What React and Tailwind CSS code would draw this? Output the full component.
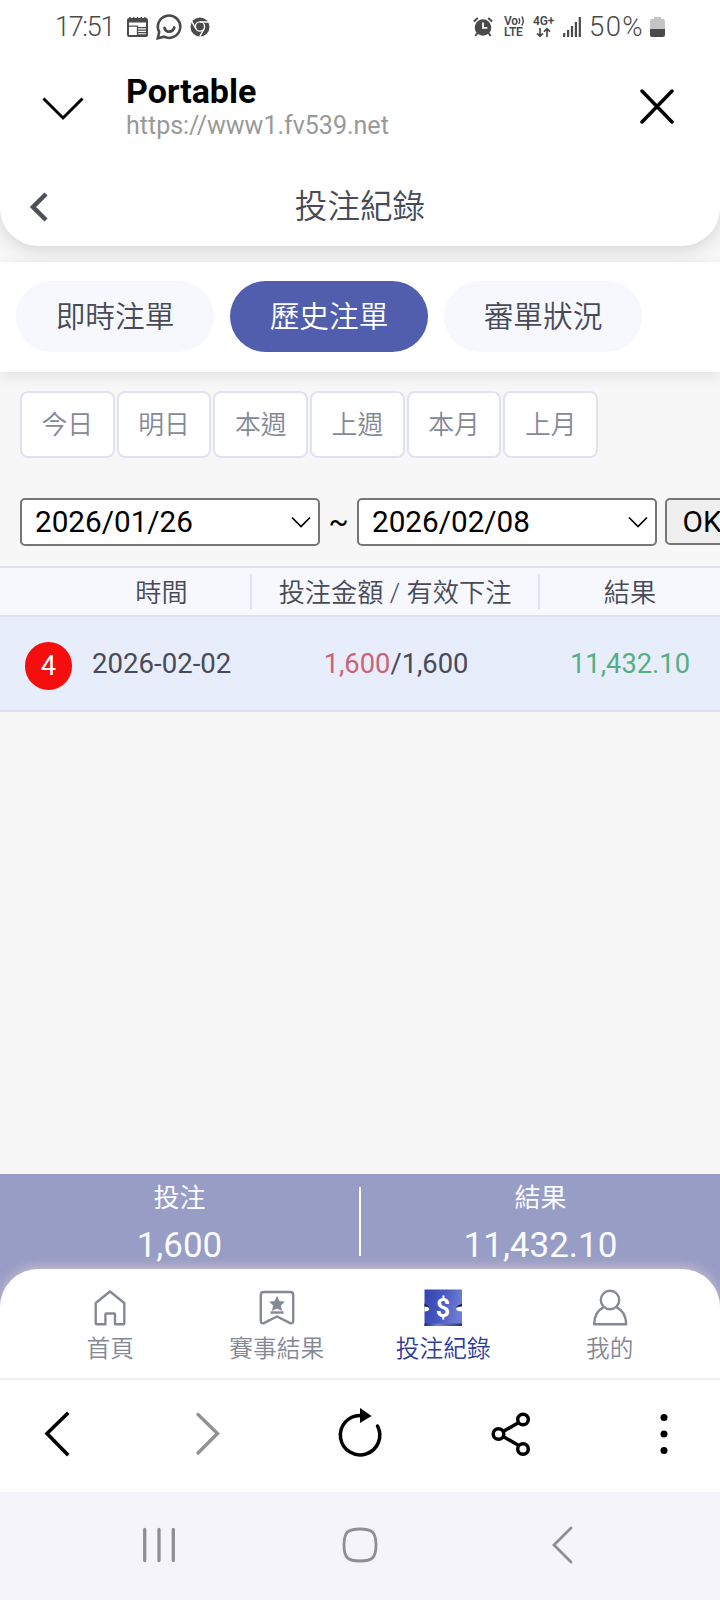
import React, {useState} from 'react'

const tabs = ['即時注單', '歷史注單', '審單狀況']
const ranges = ['今日', '明日', '本週', '上週', '本月', '上月']

function StatusBar(){
  return (
    <div className="flex h-[53px] shrink-0 items-center pl-[55px] text-[#4a4a4a]">
      <span className="w-[72px] whitespace-nowrap pt-px text-[27px] font-[350] leading-none tracking-[-1.3px]">17:51</span>
      <svg className="mr-2 h-[26px] w-[21px]" viewBox="0 0 21 26">
        <rect x="1" y="5" width="19" height="17" rx="1" fill="none" stroke="currentColor" strokeWidth="2" />
        <path d="M1 5h19v3.500H1z" fill="currentColor" />
        <path d="M3 3v4M6.700 3v4M10.500 3v4M14.200 3v4M18 3v4" stroke="currentColor" strokeWidth="1.500" />
        <path d="M1 12.200h9.500v10M11 13.700h8M11 16.200h8M11 18.700h8M11 21h8" fill="none" stroke="currentColor" strokeWidth="1.300" />
      </svg>
      <svg className="mr-2 h-[26px] w-[26px]" viewBox="0 0 26 26">
        <path d="M3.200 18A11.200 11.200 0 1 1 8 22.700L1.800 24.200z" fill="none" stroke="currentColor" strokeWidth="2.600" />
        <path d="M8.500 14c1.200 5 8 5 9.800-.5" fill="none" stroke="currentColor" strokeWidth="2.800" strokeLinecap="round" />
      </svg>
      <svg className="h-[20px] w-[20px]" viewBox="0 0 20 20">
        <circle cx="10" cy="10" r="9.500" fill="currentColor" />
        <circle cx="10" cy="9.500" r="4.600" fill="currentColor" stroke="#fff" strokeWidth="1.400" />
        <path d="M10 5h9M6 12L1.800 4.600M14 12l-4.300 7.600" stroke="#fff" strokeWidth="1.400" />
      </svg>
      <svg className="ml-[263px] h-[20px] w-[20px]" viewBox="0 0 20 20">
        <circle cx="10" cy="10.500" r="8.300" fill="currentColor" />
        <path d="M.8 4.600L4.800 1M19.200 4.600L15.200 1M4.500 16L2.300 19M15.500 16l2.200 3" stroke="currentColor" strokeWidth="2" />
        <path d="M10 5.500v5.300h4.300" fill="none" stroke="#fff" strokeWidth="1.800" />
      </svg>
      <div className="ml-[11px] w-[22px] whitespace-nowrap text-[12px] font-semibold leading-[11px] tracking-[-.2px]">
        <div className="flex items-center">Vo
          <svg className="h-[10px] w-[7px]" viewBox="0 0 7 10">
            <path d="M.8 2.200q1.800 2.800 0 5.600M3.800.5q3 4.500 0 9" fill="none" stroke="currentColor" strokeWidth="1.400" />
          </svg>
        </div>
        <div>LTE</div>
      </div>
      <div className="ml-[7px] w-[23px] whitespace-nowrap text-[12px] font-semibold leading-[11px] tracking-[-.2px]">
        <div>4G+</div>
        <svg className="ml-[3px] h-[11px] w-[15px]" viewBox="0 0 15 11">
          <path d="M4 1v8M1 6.300l3 3 3-3M11 10V2M8 4.700l3-3 3 3" fill="none" stroke="currentColor" strokeWidth="1.700" />
        </svg>
      </div>
      <svg className="ml-[7px] h-[20px] w-[18px]" viewBox="0 0 18 20">
        <path d="M1.200 16v4M5.100 13v7M9 9v11M12.900 5v15M16.800 0v20" stroke="currentColor" strokeWidth="2.200" />
      </svg>
      <span className="ml-[8px] w-[60px] whitespace-nowrap pt-px text-[27.500px] font-[350] leading-none tracking-[1.400px]">50%</span>
      <svg className="ml-px h-[20px] w-[15px]" viewBox="0 0 15 20">
        <path d="M4 2V0h7v2h2q2 0 2 2v8H0V4q0-2 2-2z" fill="#c4c4c4" />
        <path d="M0 12h15v6q0 2-2 2H2q-2 0-2-2z" fill="currentColor" />
      </svg>
    </div>
  )
}

function BrowserHeader(){
  return (
    <div className="flex h-[107px] shrink-0 items-start">
      <svg className="ml-[42px] mt-[43px] h-[26px] w-[42px]" viewBox="0 0 42 26">
        <path d="M1.500 2.500L21 22 40.500 2.500" fill="none" stroke="#000" strokeWidth="3" />
      </svg>
      <div className="ml-[42px] mt-[19px] w-[513px]">
        <div className="text-[34px] font-bold leading-[39px] text-black">Portable</div>
        <div className="text-[25px] leading-[30px] text-[#999]">https://www1.fv539.net</div>
      </div>
      <svg className="mt-[35px] h-[36px] w-[36px]" viewBox="0 0 36 36">
        <path d="M3 3l30 31M33 3L3 34" fill="none" stroke="#000" strokeWidth="3.500" strokeLinecap="round" />
      </svg>
    </div>
  )
}

function DateSelect({value}){
  return (
    <button className="flex h-[48px] w-[300px] shrink-0 items-center justify-between rounded-[5px] border-2 border-[#767676] bg-white pl-[13px] pr-[7px] text-[29.700px] leading-none text-black">
      <span>{value}</span>
      <svg className="h-[14px] w-[20px]" viewBox="0 0 20 14">
        <path d="M1 2.500l9 9 9-9" fill="none" stroke="#000" strokeWidth="1.700" />
      </svg>
    </button>
  )
}

function HomeIcon(){
  return (
    <svg className="h-[38px] w-[38px]" viewBox="0 0 38 38" fill="none" stroke="currentColor" strokeWidth="2.400" strokeLinejoin="round">
      <path d="M19 3.500L33.300 15V35.300q0 1-1 1H24V26.500q0-1-1-1h-7.600q-1 0-1 1v9.800H6q-1.300 0-1.300-1.300V15z" />
    </svg>
  )
}

function ResultIcon(){
  return (
    <svg className="h-[38px] w-[38px]" viewBox="0 0 38 38" fill="none" stroke="currentColor" strokeWidth="2.400" strokeLinejoin="round">
      <path d="M5.800 4h26.400q3 0 3 3v25.500q0 4-3.500 2.400L19 28.500 6.300 34.900q-3.500 1.600-3.500-2.400V7q0-3 3-3z" />
      <path d="M19 8.500l2.300 4.700 5.100.7-3.700 3.600.9 5.100-4.600-2.400-4.600 2.400.9-5.100-3.700-3.600 5.100-.7z" fill="currentColor" strokeWidth=".5" />
      <path d="M12.500 24.500h13" />
    </svg>
  )
}

function TicketIcon(){
  return (
    <svg className="h-[38px] w-[38px]" viewBox="0 0 38 38">
      <defs>
        <linearGradient id="ticket" x1="0" y1="0" x2="1" y2=".2">
          <stop offset="0" stopColor="#3443ae" />
          <stop offset=".55" stopColor="#4b5bc2" />
          <stop offset="1" stopColor="#6d7cd0" />
        </linearGradient>
        <linearGradient id="shade" x1="0" y1="0" x2="1" y2="0">
          <stop offset="0" stopColor="#1d2884" />
          <stop offset=".35" stopColor="#7383d2" />
          <stop offset="1" stopColor="#26328c" />
        </linearGradient>
      </defs>
      <path d="M.5 1.500H38V38H.5z" fill="url(#ticket)" />
      <path d="M.5 35.500H38V38H.5z" fill="url(#shade)" />
      <path d="M.5 15.500l4.500 3-4.500 1zM38 15.500l-6 3 6 1z" fill="#18205f" />
      <path d="M.5 18.500q4 0 5 2.500-1 2.500-5 2.500zM38 18.500q-5 0-6 2.500 1 2.500 6 2.500z" fill="#fff" />
      <text x="19" y="29" textAnchor="middle" fontSize="25" fontWeight="700" fill="#fff">$</text>
    </svg>
  )
}

function UserIcon(){
  return (
    <svg className="h-[38px] w-[38px]" viewBox="0 0 38 38" fill="none" stroke="currentColor" strokeWidth="2.400" strokeLinejoin="round">
      <circle cx="19" cy="12" r="9.200" />
      <path d="M12.500 19.300Q3.500 23.500 3.200 36.200h32Q34.900 23.500 25.500 19.300" />
    </svg>
  )
}

const navItems = [
  {label: '首頁', Icon: HomeIcon},
  {label: '賽事結果', Icon: ResultIcon},
  {label: '投注紀錄', Icon: TicketIcon, active: true},
  {label: '我的', Icon: UserIcon},
]

export default function App(){
  const [tab, setTab] = useState(1)

  return (
    <div className="flex h-[1600px] w-[720px] flex-col overflow-hidden bg-[#f7f7f7] font-['Roboto','Noto_Sans_CJK_TC',sans-serif] text-[#484b57]">
      <div className="relative z-10 shrink-0 rounded-b-[38px] bg-white shadow-[0_4px_18px_rgba(0,0,0,0.14)]">
        <StatusBar />
        <BrowserHeader />
        <div className="flex h-[86px] items-center pt-[7px]">
          <svg className="ml-[29px] h-[32px] w-[20px]" viewBox="0 0 20 32">
            <path d="M17 3L4 16l13 13" fill="none" stroke="#4d5058" strokeWidth="4.500" />
          </svg>
          <h1 className="mr-[49px] flex-1 pt-px text-center text-[32.600px] font-[350] leading-[46px]">投注紀錄</h1>
        </div>
      </div>

      <div className="relative z-20 mt-4 flex h-[110px] shrink-0 gap-4 bg-white pl-4 pt-[19px] font-[350] shadow-[0_4px_14px_rgba(0,0,0,0.09)]">
        {tabs.map((t, i) => (
          <button
            key={t}
            onClick={() => setTab(i)}
            className={i === tab
              ? 'h-[71px] w-[198px] rounded-full bg-[#515eae] pt-px text-[29.700px] text-white'
              : 'h-[71px] w-[198px] rounded-full bg-[#f6f8fd] pt-px text-[29.700px]'}
          >{t}</button>
        ))}
      </div>

      <div className="mt-[19px] flex shrink-0 gap-[2px] pl-5">
        {ranges.map(r => (
          <button key={r} className="h-[67px] w-[94.700px] rounded-lg border-2 border-[#e1e2f0] bg-white pt-[2px] text-[25.800px] font-[350] text-[#858996]">{r}</button>
        ))}
      </div>

      <div className="mt-[39px] flex h-[49px] shrink-0 items-center pl-5 text-black">
        <DateSelect value="2026/01/26" />
        <span className="w-[37px] shrink-0 text-center text-[29.700px] leading-none">~</span>
        <DateSelect value="2026/02/08" />
        <button className="ml-2 h-[47px] w-[74px] shrink-0 rounded-[5px] border-2 border-[#767676] bg-[#efefef] pt-px text-[29.700px] leading-none">OK</button>
      </div>

      <div className="mt-[20px] flex h-[51px] shrink-0 items-center border-y-2 border-[#dfe2ee] bg-[#f6f8fe] text-[26.200px] font-[350]">
        <div className="w-[250px] pl-[73px] pt-[4px] text-center">時間</div>
        <div className="h-[35px] w-[290px] border-x-2 border-[#e0e3f0] text-center leading-[38px]">投注金額 / 有效下注</div>
        <div className="flex-1 pt-[4px] text-center">結果</div>
      </div>
      <div className="flex h-[95px] shrink-0 items-center border-b-2 border-[#dcdfee] bg-[#e8edfc] text-[27.300px]">
        <div className="ml-[25px] mt-[5px] flex h-[48px] w-[47px] items-center justify-center rounded-full bg-[#f60d0d] text-white">4</div>
        <div className="ml-5 w-[160px] pt-px text-[27.600px]">2026-02-02</div>
        <div className="w-[288px] pt-px text-center"><span className="text-[#cc6478]">1,600</span>/1,600</div>
        <div className="flex-1 pt-px text-center text-[#54b084]">11,432.10</div>
      </div>

      <div className="mt-auto shrink-0 bg-[#979dc5]">
        <div className="flex h-[95px] text-center text-[#fafbff]">
          <div className="flex-1">
            <div className="pt-[5px] text-[26px] leading-[39px]">投注</div>
            <div className="pt-[7px] text-[35px] leading-[41px]">1,600</div>
          </div>
          <div className="mt-[13px] h-[69px] w-[2px] bg-white" />
          <div className="flex-1">
            <div className="pt-[5px] text-[26px] leading-[39px]">結果</div>
            <div className="pt-[7px] text-[35px] leading-[41px]">11,432.10</div>
          </div>
        </div>
        <div className="flex h-[109px] rounded-t-[38px] bg-white px-[27px] shadow-[0_-2px_12px_rgba(255,225,225,0.5)]">
          {navItems.map(({label, Icon, active}) => (
            <a key={label} className={active
              ? 'flex flex-1 flex-col items-center pt-[19px] text-[#2e3c9e]'
              : 'flex flex-1 flex-col items-center pt-[19px] text-[#858996]'}>
              <Icon />
              <span className="mt-[6px] text-[23.700px] font-[350] leading-[34px]">{label}</span>
            </a>
          ))}
        </div>
      </div>

      <div className="flex h-[114px] shrink-0 items-center border-t-2 border-[#f0f0f0] bg-white pb-[5px]">
        <svg className="ml-[43px] h-[46px] w-[28px]" viewBox="0 0 28 46">
          <path d="M24 3L4 22.500 24 43" fill="none" stroke="#000" strokeWidth="3.600" strokeLinecap="square" />
        </svg>
        <svg className="ml-[122px] h-[46px] w-[28px]" viewBox="0 0 28 46">
          <path d="M5 3.500L24.500 22.500 5 42" fill="none" stroke="#929292" strokeWidth="3.400" strokeLinecap="round" />
        </svg>
        <svg className="ml-[115px] h-[52px] w-[48px]" viewBox="0 0 48 52">
          <path d="M24 7.500A19.700 19.700 0 1 0 41.500 18" fill="none" stroke="#000" strokeWidth="3.500" strokeLinecap="round" />
          <path d="M24 0l11.500 8L24 15z" fill="#000" />
        </svg>
        <svg className="ml-[106px] h-[46px] w-[42px]" viewBox="0 0 42 46" fill="none" stroke="#000" strokeWidth="3.500">
          <path d="M14 20l14-8M14 26l14 8" />
          <circle cx="8.500" cy="23" r="5.300" />
          <circle cx="33" cy="8.500" r="5.300" />
          <circle cx="33" cy="38" r="5.300" />
        </svg>
        <svg className="ml-[128px] h-[42px] w-[8px]" viewBox="0 0 8 42">
          <circle cx="4" cy="4.500" r="3.500" />
          <circle cx="4" cy="21" r="3.500" />
          <circle cx="4" cy="37.500" r="3.500" />
        </svg>
      </div>

      <div className="flex h-[108px] shrink-0 items-center bg-[#f4f4fa] pb-[2px]">
        <svg className="ml-[142px] h-[36px] w-[34px]" viewBox="0 0 34 36">
          <path d="M2.700 2.500v31M17 2.500v31M31.300 2.500v31" stroke="#8e8e94" strokeWidth="3.300" strokeLinecap="round" />
        </svg>
        <svg className="ml-[165px] h-[38px] w-[38px]" viewBox="0 0 38 38">
          <path d="M19 3C31 3 35 6 35 19S31 35 19 35 3 32 3 19 7 3 19 3z" fill="none" stroke="#8e8e94" strokeWidth="2.800" />
        </svg>
        <svg className="ml-[172px] h-[40px] w-[24px]" viewBox="0 0 24 40">
          <path d="M20 3L3 20l17 17" fill="none" stroke="#8e8e94" strokeWidth="2.800" strokeLinecap="round" />
        </svg>
      </div>
    </div>
  )
}
